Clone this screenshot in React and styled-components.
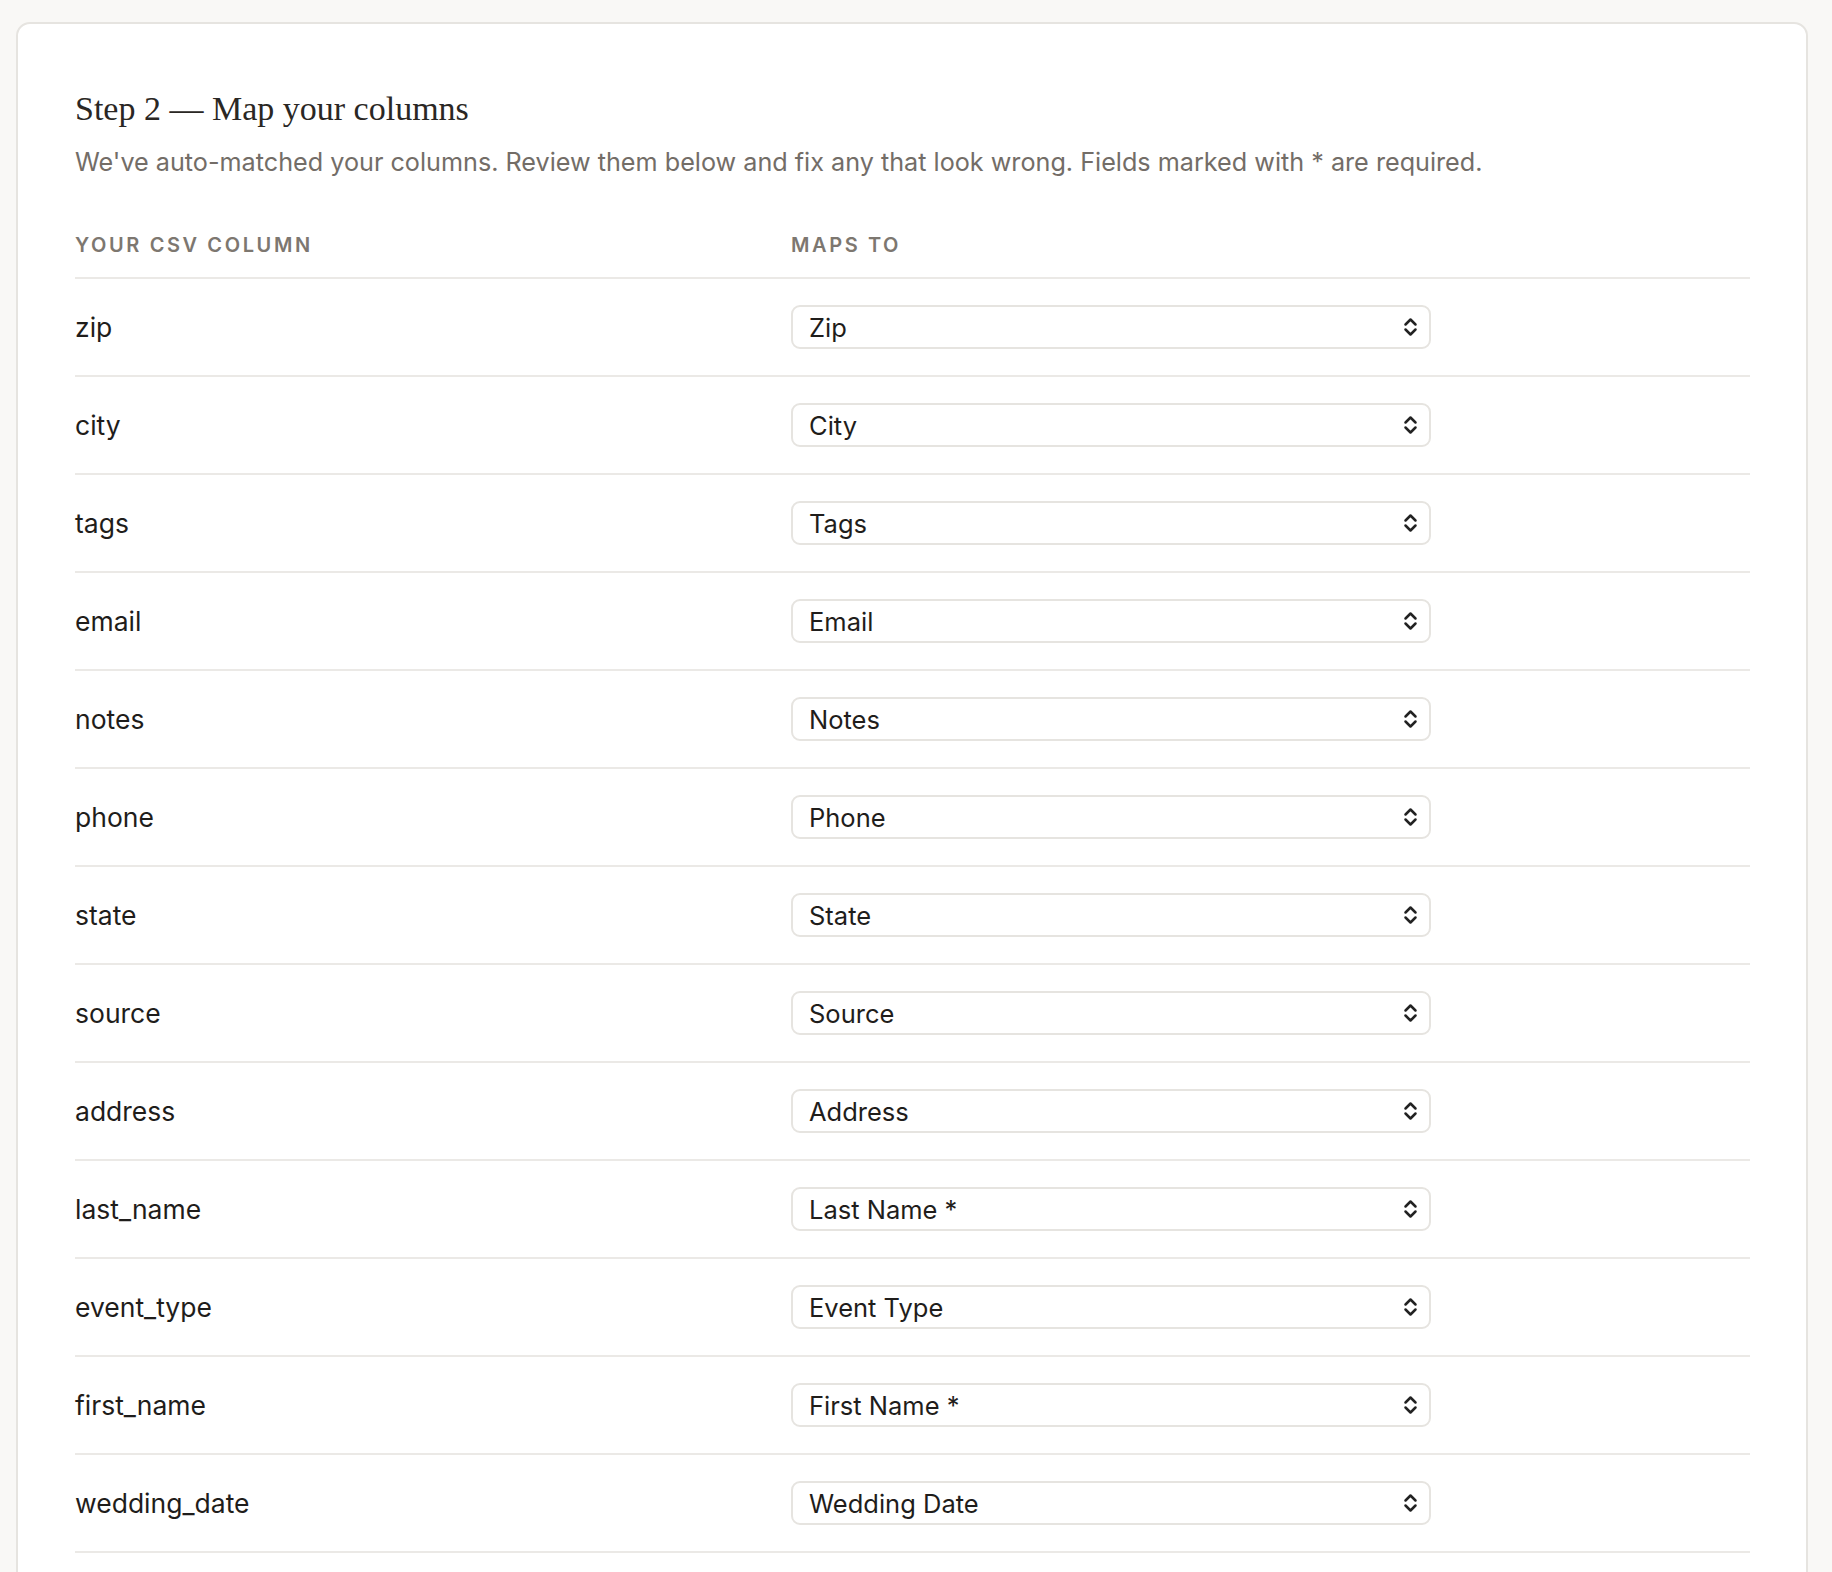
import { useState } from 'react'
import styled, { createGlobalStyle } from 'styled-components'

const GlobalStyle = createGlobalStyle`
    html, body {
        margin: 0;
        background: #f9f8f6;
    }
    body {
        font-family: Inter, 'Noto Sans', sans-serif;
        color: #1f1d1b;
    }
`

const FIELDS = [
    'Zip',
    'City',
    'Tags',
    'Email',
    'Notes',
    'Phone',
    'State',
    'Source',
    'Address',
    'Last Name *',
    'Event Type',
    'First Name *',
    'Wedding Date',
]

const MAPPINGS = [
    ['zip', 'Zip'],
    ['city', 'City'],
    ['tags', 'Tags'],
    ['email', 'Email'],
    ['notes', 'Notes'],
    ['phone', 'Phone'],
    ['state', 'State'],
    ['source', 'Source'],
    ['address', 'Address'],
    ['last_name', 'Last Name *'],
    ['event_type', 'Event Type'],
    ['first_name', 'First Name *'],
    ['wedding_date', 'Wedding Date'],
]

const Page = styled.div`
    padding: 22px 24px 0 16px;
`

const Card = styled.section`
    background: #ffffff;
    border: 2px solid #e6e4e0;
    border-radius: 14px;
    padding: 63px 56px 56px 57px;
`

const Title = styled.h2`
    margin: 0;
    font-family: 'Liberation Serif', 'DejaVu Serif', serif;
    font-weight: 400;
    font-size: 34px;
    line-height: 44px;
    color: #2a2724;
`

const Lead = styled.p`
    margin: 14px 0 0;
    font-size: 25.2px;
    line-height: 34px;
    color: #736d67;
`

const Grid = styled.div`
    display: grid;
    grid-template-columns: 716px 1fr;
    margin-top: 42px;
`

const HeadCell = styled.div`
    padding: 12px 0 20px;
    border-bottom: 2px solid #ebe9e6;
    font-size: 20px;
    line-height: 24px;
    font-weight: 600;
    letter-spacing: 0.13em;
    text-transform: uppercase;
    color: #7d7770;
`

const Cell = styled.div`
    display: flex;
    align-items: center;
    height: 96px;
    border-bottom: 2px solid #ebe9e6;
    font-size: 26.5px;
    color: #1f1d1b;
`

const SelectWrap = styled.div`
    position: relative;
    width: 640px;
`

const Select = styled.select`
    appearance: none;
    width: 100%;
    height: 44px;
    padding: 0 48px 0 16px;
    border: 2px solid #e6e4e0;
    border-radius: 9px;
    background: #ffffff;
    font-family: inherit;
    font-size: 25.5px;
    color: #1f1d1b;
    outline: none;
    cursor: pointer;
`

const Arrow = styled.svg`
    position: absolute;
    right: 13px;
    top: 50%;
    width: 15px;
    height: 21px;
    transform: translateY(-50%);
    pointer-events: none;
`

const UpDown = () => (
    <Arrow viewBox="0 0 15 21" fill="none" stroke="#222" strokeWidth="2.5" strokeLinecap="round" strokeLinejoin="round">
        <path d="M2.5 8 L7.5 3 L12.5 8" />
        <path d="M2.5 13 L7.5 18 L12.5 13" />
    </Arrow>
)

const MappingRow = ({ column, value, onChange }) => (
    <>
        <Cell>{column}</Cell>
        <Cell>
            <SelectWrap>
                <Select value={value} onChange={(e) => onChange(column, e.target.value)}>
                    {FIELDS.map((f) => (
                        <option key={f} value={f}>
                            {f}
                        </option>
                    ))}
                </Select>
                <UpDown />
            </SelectWrap>
        </Cell>
    </>
)

const App = () => {
    const [map, setMap] = useState(Object.fromEntries(MAPPINGS))

    const update = (column, value) => setMap((m) => ({ ...m, [column]: value }))

    return (
        <Page>
            <GlobalStyle />
            <Card>
                <Title>Step 2 — Map your columns</Title>
                <Lead>
                    We've auto-matched your columns. Review them below and fix any that look wrong. Fields marked
                    with * are required.
                </Lead>
                <Grid>
                    <HeadCell>Your CSV column</HeadCell>
                    <HeadCell>Maps to</HeadCell>
                    {MAPPINGS.map(([column]) => (
                        <MappingRow key={column} column={column} value={map[column]} onChange={update} />
                    ))}
                </Grid>
            </Card>
        </Page>
    )
}

export default App
